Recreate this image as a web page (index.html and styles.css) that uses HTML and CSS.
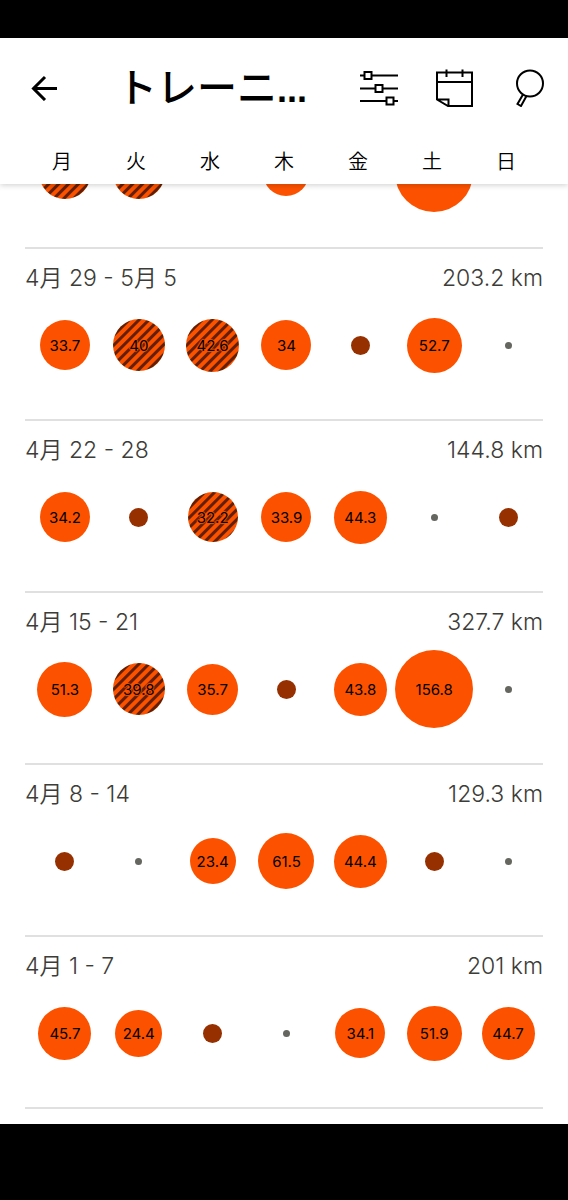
FILE: index.html
```html
<!DOCTYPE html>
<html lang="ja">

<head>
  <meta charset="UTF-8">
  <meta name="viewport" content="width=device-width, initial-scale=1.0">
  <title>トレーニングログ</title>
  <link rel="stylesheet" href="styles.css">
</head>

<body>
  <div class="system-bar status-bar"></div>

  <header class="header">
    <div class="toolbar">
      <button type="button" class="icon-button back" aria-label="戻る">
        <svg width="26" height="26" viewBox="0 0 26 26">
          <path d="M26 13.5H3M14 2L2.5 13.5L14 25" />
        </svg>
      </button>
      <h1 class="title">トレーニ<span class="dots">...</span></h1>
      <div class="actions">
        <button type="button" class="icon-button" aria-label="フィルター">
          <svg width="38" height="38" viewBox="0 0 38 38">
            <path d="M0 6.5H4M12 6.5H38M0 19.5H15M23 19.5H38M0 32H26M34 32H38" />
            <path d="M4.5 3H11.5V10H4.5ZM15.5 16H22.5V23H15.5ZM26.5 28.5H33.5V35.5H26.5Z" />
          </svg>
        </button>
        <button type="button" class="icon-button" aria-label="カレンダー">
          <svg width="38" height="38" viewBox="0 0 38 38">
            <path d="M2 3.5H37V37H13L2 30.5ZM2 13H37M11.5 0.5V8M27.5 0.5V8M2 30.5H13.5V37" />
          </svg>
        </button>
        <button type="button" class="icon-button" aria-label="検索">
          <svg width="38" height="38" viewBox="0 0 38 38">
            <circle cx="20" cy="14.5" r="13" />
            <path d="M13 25.5L7.5 35L11 37L16.5 27" />
          </svg>
        </button>
      </div>
    </div>
    <div class="weekdays">
      <span>月</span>
      <span>火</span>
      <span>水</span>
      <span>木</span>
      <span>金</span>
      <span>土</span>
      <span>日</span>
    </div>
  </header>

  <main class="log">
    <!-- scrolled halfway under the header -->
    <section class="week week-scrolled">
      <div class="days">
        <span class="day striped" style="width: 52px"></span>
        <span class="day striped" style="width: 52px"></span>
        <span class="day none"></span>
        <span class="day" style="width: 46px"></span>
        <span class="day none"></span>
        <span class="day" style="width: 78px"></span>
        <span class="day none"></span>
      </div>
    </section>

    <section class="week">
      <div class="week-header">
        <h2>4月 29 - 5月 5</h2>
        <span>203.2 km</span>
      </div>
      <div class="days">
        <span class="day" style="width: 50px">33.7</span>
        <span class="day striped" style="width: 52px">40</span>
        <span class="day striped" style="width: 53px">42.6</span>
        <span class="day" style="width: 50px">34</span>
        <span class="day rest"></span>
        <span class="day" style="width: 55px">52.7</span>
        <span class="day none"></span>
      </div>
    </section>

    <section class="week">
      <div class="week-header">
        <h2>4月 22 - 28</h2>
        <span>144.8 km</span>
      </div>
      <div class="days">
        <span class="day" style="width: 50px">34.2</span>
        <span class="day rest"></span>
        <span class="day striped" style="width: 50px">32.2</span>
        <span class="day" style="width: 50px">33.9</span>
        <span class="day" style="width: 53px">44.3</span>
        <span class="day none"></span>
        <span class="day rest"></span>
      </div>
    </section>

    <section class="week">
      <div class="week-header">
        <h2>4月 15 - 21</h2>
        <span>327.7 km</span>
      </div>
      <div class="days">
        <span class="day" style="width: 55px">51.3</span>
        <span class="day striped" style="width: 52px">39.8</span>
        <span class="day" style="width: 51px">35.7</span>
        <span class="day rest"></span>
        <span class="day" style="width: 53px">43.8</span>
        <span class="day" style="width: 78px">156.8</span>
        <span class="day none"></span>
      </div>
    </section>

    <section class="week">
      <div class="week-header">
        <h2>4月 8 - 14</h2>
        <span>129.3 km</span>
      </div>
      <div class="days">
        <span class="day rest"></span>
        <span class="day none"></span>
        <span class="day" style="width: 46px">23.4</span>
        <span class="day" style="width: 56px">61.5</span>
        <span class="day" style="width: 53px">44.4</span>
        <span class="day rest"></span>
        <span class="day none"></span>
      </div>
    </section>

    <section class="week">
      <div class="week-header">
        <h2>4月 1 - 7</h2>
        <span>201 km</span>
      </div>
      <div class="days">
        <span class="day" style="width: 53px">45.7</span>
        <span class="day" style="width: 47px">24.4</span>
        <span class="day rest"></span>
        <span class="day none"></span>
        <span class="day" style="width: 50px">34.1</span>
        <span class="day" style="width: 55px">51.9</span>
        <span class="day" style="width: 53px">44.7</span>
      </div>
    </section>
  </main>

  <div class="system-bar nav-bar"></div>
</body>

</html>
```
FILE: styles.css
```css
* {
  box-sizing: border-box;
}

body {
  display: flex;
  flex-direction: column;
  min-height: 100vh;
  margin: 0;
  background-color: #fff;
  color: #000;
  font-family: 'Inter', 'Noto Sans CJK JP', sans-serif;
}

.system-bar {
  position: relative;
  z-index: 2;
  flex-shrink: 0;
  background-color: #000;
}

.status-bar {
  height: 38px;
}

.nav-bar {
  height: 76px;
}

.header {
  position: relative;
  z-index: 1;
  background-color: #fff;
  box-shadow: 0 1px 6px rgba(0, 0, 0, 0.2);
}

.toolbar {
  display: flex;
  align-items: center;
  height: 100px;
  padding: 0 20px 0 31px;
}

.icon-button {
  display: flex;
  padding: 0;
  border: none;
  background: none;
  cursor: pointer;
}

.icon-button svg {
  fill: none;
  stroke: #000;
  stroke-width: 2;
}

.back svg {
  stroke-width: 3;
}

.title {
  flex: 1;
  margin: 2px 0 0 60px;
  font-family: 'Liberation Sans', 'Noto Sans CJK JP', sans-serif;
  font-size: 40px;
  font-weight: 500;
  line-height: 48px;
  white-space: nowrap;
}

.dots {
  font-size: 36px;
  font-weight: 700;
}

.actions {
  display: flex;
  gap: 37px;
}

.weekdays,
.days {
  display: grid;
  grid-template-columns: repeat(7, minmax(0, 1fr));
  align-items: center;
  justify-items: center;
}

.weekdays {
  padding: 2px 25px 0;
  font-size: 20px;
  font-weight: 350;
  line-height: 44px;
}

.log {
  flex: 1;
  padding: 0 25px 15px;
}

.week {
  padding: 13px 0 35px;
  border-bottom: 2px solid #e0e0e0;
}

.week-scrolled {
  margin-top: -50px;
  padding-top: 0;
}

.week-header {
  display: flex;
  justify-content: space-between;
  margin-bottom: 12px;
  color: #3c3c38;
  font-size: 23px;
  font-weight: 350;
  line-height: 32px;
}

.week-header h2 {
  margin: 0;
  font-size: inherit;
  font-weight: inherit;
}

.days {
  height: 78px;
  margin: 0 -2px 0 3px;
}

.day {
  display: flex;
  align-items: center;
  justify-content: center;
  aspect-ratio: 1;
  border-radius: 50%;
  background-color: #fc5200;
  font-size: 15px;
}

.striped {
  background-image: repeating-linear-gradient(135deg, #fc5200 0, #fc5200 3px, #641f00 4px, #641f00 6px, #fc5200 7px);
  text-shadow: 1px 0 1px #fc5200, -1px 0 1px #fc5200, 0 1px 1px #fc5200, 0 -1px 1px #fc5200;
}

.rest {
  width: 19px;
  background-color: #963000;
}

.none {
  width: 7px;
  background-color: #666660;
}
```
